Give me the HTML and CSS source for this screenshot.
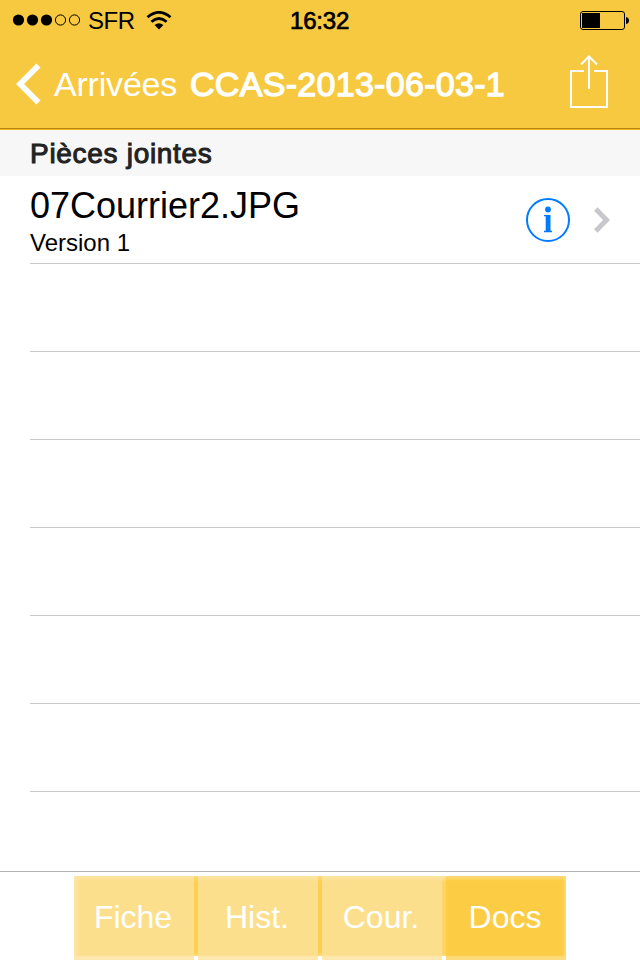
FILE: index.html
```html
<!DOCTYPE html>
<html lang="fr">
<head>
    <meta charset="UTF-8">
    <meta name="viewport" content="width=device-width, initial-scale=1.0">
    <title>Pièces jointes</title>
    <link rel="stylesheet" href="styles.css">
</head>
<body>
    <header class="header">
        <div class="status-bar">
            <div class="carrier">
                <svg class="signal" width="68" height="12" viewBox="0 0 68 12">
                    <circle cx="5.500" cy="6" r="5.6"/>
                    <circle cx="19.500" cy="6" r="5.6"/>
                    <circle cx="33.500" cy="6" r="5.6"/>
                    <circle cx="47.500" cy="6" r="5.1" fill="none" stroke="#000"/>
                    <circle cx="61.500" cy="6" r="5.1" fill="none" stroke="#000"/>
                </svg>
                <span class="operator">SFR</span>
                <svg class="wifi" width="26" height="19" viewBox="0 0 26 19">
                    <path d="M1.500 6.300Q13 -3.500 24.500 6.300M5.400 10.700Q13 4.300 20.600 10.700" fill="none" stroke="#000" stroke-width="2.800"/>
                    <path d="M8.600 14Q13 10.400 17.400 14L13 18.500Z"/>
                </svg>
            </div>
            <span class="clock">16:32</span>
            <svg class="battery" width="50" height="20" viewBox="0 0 50 20">
                <rect x="0.500" y="1.500" width="44" height="18" rx="2.500" fill="none" stroke="#000"/>
                <rect x="2" y="3" width="18" height="15"/>
                <path d="M46 7Q49 7.500 49 10.500Q49 13.500 46 14Z"/>
            </svg>
        </div>
        <nav class="nav-bar">
            <a class="back" href="#">
                <svg width="26" height="42" viewBox="0 0 26 42">
                    <path d="M22.500 2.500L4 21L22.500 39.500" fill="none" stroke="#fff" stroke-width="5.800"/>
                </svg>
                <span class="back-label">Arrivées</span>
            </a>
            <h1 class="title">CCAS-2013-06-03-1</h1>
            <a class="share" href="#">
                <svg width="38" height="54" viewBox="0 0 38 54">
                    <path d="M14 16H1V52H37V16H24M19 34V2M11 9.500L19 1.500L27 9.500" fill="none" stroke="#fff" stroke-width="2"/>
                </svg>
            </a>
        </nav>
    </header>

    <main class="content">
        <h2 class="section-title">Pièces jointes</h2>
        <ul class="files">
            <li class="row">
                <div class="file">
                    <span class="file-name">07Courrier2.JPG</span>
                    <span class="file-version">Version 1</span>
                </div>
                <svg class="info" width="44" height="44" viewBox="0 0 44 44">
                    <circle cx="22" cy="22" r="21" fill="none" stroke="#007aff" stroke-width="2"/>
                    <circle cx="22" cy="11.500" r="2.900" fill="#007aff"/>
                    <path d="M18 17H24.500V32.800H26V34.200H18V32.800H19.700V18.300H18Z" fill="#007aff"/>
                </svg>
                <svg class="chevron" width="16" height="26" viewBox="0 0 16 26">
                    <path d="M1.800 2L12.500 13L1.800 24" fill="none" stroke="#c7c7cc" stroke-width="5"/>
                </svg>
            </li>
            <li class="row"></li>
            <li class="row"></li>
            <li class="row"></li>
            <li class="row"></li>
            <li class="row"></li>
            <li class="row"></li>
        </ul>
    </main>

    <footer class="toolbar">
        <div class="tabs">
            <button class="tab first">Fiche</button>
            <span class="divider"></span>
            <button class="tab">Hist.</button>
            <span class="divider"></span>
            <button class="tab">Cour.</button>
            <span class="divider light"></span>
            <button class="tab active">Docs</button>
        </div>
    </footer>
</body>
</html>
```

FILE: styles.css
```css
* {
    box-sizing: border-box;
}
body {
    margin: 0;
    height: 960px;
    display: flex;
    flex-direction: column;
    overflow: hidden;
    background: #fff;
    color: #000;
    font-family: "Liberation Sans", Arial, sans-serif;
}
svg {
    display: block;
    flex-shrink: 0;
}
.header {
    height: 130px;
    flex-shrink: 0;
    background: #f7c940;
    border-bottom: 1px solid #f5b51c;
    box-shadow: inset 0 -1px 0 #b4860f;
}
.status-bar {
    height: 40px;
    padding: 0 10px 0 13px;
    display: grid;
    grid-template-columns: 277px 1fr 50px;
    align-items: center;
    font-size: 24px;
}
.carrier {
    display: flex;
    align-items: center;
}
.operator {
    width: 46px;
    margin: 2px 12px 0 7px;
    letter-spacing: -0.5px;
}
.clock {
    margin-top: 2px;
    letter-spacing: -0.2px;
    -webkit-text-stroke: 0.7px #000;
}
.nav-bar {
    height: 88px;
    padding: 0 32px 0 16px;
    display: flex;
    align-items: center;
    font-size: 34px;
    color: #fff;
}
.back {
    width: 174px;
    display: flex;
    align-items: center;
    color: #fff;
    text-decoration: none;
}
.back-label {
    margin-left: 12px;
    letter-spacing: -0.2px;
}
.title {
    margin: 0;
    flex: 1;
    font-size: 34px;
    font-weight: normal;
    letter-spacing: 0.3px;
    white-space: nowrap;
    -webkit-text-stroke: 1.3px #fff;
}
.share {
    margin-top: -5px;
}
.content {
    flex: 1;
}
.section-title {
    height: 46px;
    margin: 0;
    padding-left: 30px;
    background: #f7f7f7;
    color: #222;
    font-size: 28px;
    font-weight: normal;
    line-height: 48px;
    letter-spacing: 0.7px;
    -webkit-text-stroke: 1px #222;
}
.files {
    margin: 0;
    padding: 0 0 0 30px;
    list-style: none;
}
.row {
    height: 88px;
    padding-right: 30px;
    display: flex;
    align-items: center;
    border-bottom: 1px solid #c8c7cc;
}
.file {
    flex: 1;
    padding-top: 4px;
    display: flex;
    flex-direction: column;
}
.file-name {
    font-size: 36px;
    line-height: 42px;
}
.file-version {
    font-size: 24px;
    line-height: 32px;
}
.info {
    margin-right: 24px;
}
.toolbar {
    height: 89px;
    padding-top: 4px;
    display: flex;
    justify-content: center;
    border-top: 1px solid #b2b2b2;
}
.tabs {
    height: 84px;
    display: flex;
}
.tab {
    width: 120px;
    height: 84px;
    padding: 0 2px 2px 0;
    border: none;
    background: linear-gradient(#fde5a4, #fcdf8d 5px, #fcdf8d 79px, #fde8b0 81px);
    color: #fff;
    font-family: inherit;
    font-size: 32px;
}
.tab.first {
    box-shadow: inset 5px 0 4px -2px #fde6a8;
}
.tab.active {
    background: linear-gradient(#fddb7b, #fdcc45 5px, #fdcc45 79px, #fddb7b 81px);
    box-shadow: inset -4px 0 3px -2px #fddb7b;
}
.divider {
    width: 4px;
    height: 80px;
    background: linear-gradient(#fddb7b, #fdce50 6px, #fdce50 76px, #fddb7b);
}
.divider.light {
    background: linear-gradient(#fde5a4, #fdd468 6px, #fdd468 76px, #fddb7b);
}
```
